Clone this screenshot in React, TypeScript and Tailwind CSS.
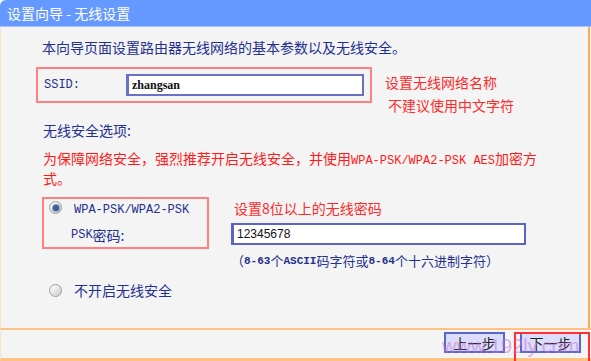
import React from "react";

const cjk = "font-['Noto_Sans_CJK_SC',sans-serif]";
const mono = "font-['Liberation_Mono','Noto_Sans_CJK_SC',monospace]";

function Radio({ checked }: { checked?: boolean }) {
  return (
    <span className="flex h-[13px] w-[13px] shrink-0 items-center justify-center rounded-full border border-[#9c9c9c] bg-gradient-to-br from-[#ffffff] to-[#cfcfcf]">
      {checked && <span className="h-[6px] w-[6px] rounded-full bg-[#3f5e8c] shadow-[0_0_1px_1px_#7fa0d0]" />}
    </span>
  );
}

export default function App() {
  return (
    <div className={`relative h-[361px] w-[591px] overflow-hidden bg-[#f4f4f4] ${cjk}`}>
      {/* title bar */}
      <div className="flex h-[27px] items-center rounded-tl-[6px] border-b border-[#a6c2ff] bg-[#6699ff] pl-[7px] text-[14px] leading-none text-white">
        设置向导 - 无线设置
      </div>

      {/* content */}
      <div className="flex h-[301px] w-[590px] flex-col border-l border-r-2 border-l-[#fbe4c8] border-r-[#ffaa4c] text-[#24308f]">
        <div className="mt-[12px] h-[16px] pl-[41px] text-[14px] leading-[16px]">
          本向导页面设置路由器无线网络的基本参数以及无线安全。
        </div>

        {/* SSID row */}
        <div className="mt-[12px] flex h-[46px] items-start pl-[35px]">
          <div className="flex h-[36px] w-[336px] items-center border-2 border-[#ff8080] pl-[6px]">
            <span className={`${mono} w-[82px] text-[12px]`}>SSID:</span>
            <div className="flex h-[22px] w-[238px] items-center border-2 border-l-[3px] border-[#6870c8] bg-white pl-[3px]">
              <span className="font-['Liberation_Serif',serif] text-[12px] font-bold text-[#111]">zhangsan</span>
            </div>
          </div>
          <div className="ml-[13px] flex flex-col pt-[7px] text-[14px] leading-[16px] text-[#ff2a2a]">
            <span>设置无线网络名称</span>
            <span className="ml-[3px] mt-[7px]">不建议使用中文字符</span>
          </div>
        </div>

        <div className="mt-[9px] h-[16px] pl-[42px] text-[14px] leading-[16px]">无线安全选项:</div>

        <div className="mt-[10px] flex h-[40px] flex-col pl-[42px] text-[14px] text-[#ff1a1a]">
          <div className="h-[20px] whitespace-nowrap leading-[20px]">
            为保障网络安全，强烈推荐开启无线安全，并使用<span className={`${mono} text-[12px] leading-[20px]`}>WPA-PSK/WPA2-PSK AES</span>加密方
          </div>
          <div className="h-[20px] leading-[20px]">式。</div>
        </div>

        {/* WPA row */}
        <div className="mt-[9px] flex h-[72px] items-start pl-[41px]">
          <div className="flex h-[52px] w-[167px] flex-col border-2 border-[#ff8080]">
            <div className="flex h-[19px] items-start pl-[5px] pt-[2px]">
              <Radio checked />
              <span className={`${mono} ml-[12px] mt-[1px] h-[16px] text-[12px] leading-[16px]`}>WPA-PSK/WPA2-PSK</span>
            </div>
            <div className={`${mono} ml-[27px] mt-[9px] flex h-[16px] items-center text-[12px] leading-[16px]`}>
              PSK<span className={`${cjk} text-[14px] leading-[16px]`}>密码:</span>
            </div>
          </div>
          <div className="ml-[22px] flex flex-col pt-[3px]">
            <span className="ml-[3px] h-[16px] text-[14px] leading-[16px] text-[#ff2a2a]">设置8位以上的无线密码</span>
            <div className="mt-[7px] flex h-[22px] w-[295px] items-center border-2 border-l-[3px] border-[#5a64c4] bg-white pl-[3px]">
              <span className="font-['Liberation_Sans',sans-serif] text-[12px] text-[#111]">12345678</span>
            </div>
            <div className="mt-[8px] flex h-[16px] items-center whitespace-nowrap text-[13px] leading-[16px]">
              （<span className={`${mono} text-[11px] font-bold`}>8-63</span>个<span className={`${mono} text-[11px] font-bold`}>ASCII</span>码字符或<span className={`${mono} text-[11px] font-bold`}>8-64</span>个十六进制字符）
            </div>
          </div>
        </div>

        <div className="mt-[13px] flex h-[16px] items-center pl-[48px]">
          <Radio />
          <span className="ml-[12px] text-[14px] leading-[16px]">不开启无线安全</span>
        </div>
      </div>

      {/* bottom bar */}
      <div className="flex h-[33px] items-start justify-end gap-[15px] border-t-2 border-b-[3px] border-[#ffc283] border-l border-l-[#fbe4c8] pr-[10px] pt-[2px]">
        <button className="flex h-[21px] w-[61px] items-center justify-center border-2 border-[#5a66cc] bg-[#dcdcfc] text-[14px] leading-none text-[#222]">
          上一步
        </button>
        <button className="flex h-[21px] w-[61px] items-center justify-center border-2 border-[#5a66cc] bg-[#dcdcfc] text-[14px] leading-none text-[#222]">
          下一步
        </button>
      </div>

      {/* annotation box around next button */}
      <div className="absolute left-[514px] top-[332px] h-[32px] w-[76px] border-2 border-[#ff3030]" />

      {/* watermark */}
      <div className="pointer-events-none absolute left-[442px] top-[336px] font-['Liberation_Sans',sans-serif] text-[20px] leading-none text-[#c070d0] opacity-50">
        www.192ly.com
      </div>
    </div>
  );
}
